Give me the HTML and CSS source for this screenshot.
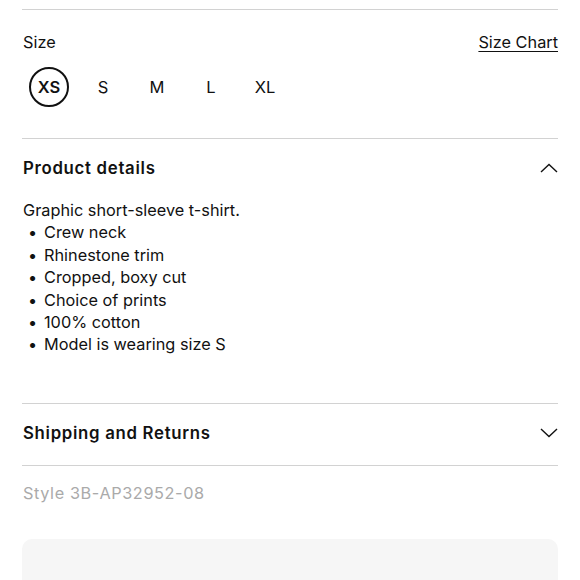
FILE: index.html
```html
<!DOCTYPE html>
<html lang="en">
<head>
  <meta charset="UTF-8">
  <title>Product</title>
  <link rel="stylesheet" href="styles.css">
</head>
<body>

<section class="size-section">
  <div class="size-head">
    <span>Size</span>
    <a href="#" class="size-chart">Size Chart</a>
  </div>
  <div class="sizes">
    <button class="size selected">XS</button>
    <button class="size">S</button>
    <button class="size">M</button>
    <button class="size">L</button>
    <button class="size">XL</button>
  </div>
</section>

<section class="panel open">
  <div class="panel-head">
    <h3>Product details</h3>
    <svg class="chevron" width="18" height="10" viewBox="0 0 18 10"><path d="M1 9 L9 1.5 L17 9" fill="none" stroke="#111" stroke-width="1.4"/></svg>
  </div>
  <div class="details">
    <p>Graphic short-sleeve t-shirt.</p>
    <ul>
      <li>Crew neck</li>
      <li>Rhinestone trim</li>
      <li>Cropped, boxy cut</li>
      <li>Choice of prints</li>
      <li>100% cotton</li>
      <li>Model is wearing size S</li>
    </ul>
  </div>
</section>

<section class="panel">
  <div class="panel-head">
    <h3>Shipping and Returns</h3>
    <svg class="chevron" width="18" height="10" viewBox="0 0 18 10"><path d="M1 1 L9 8.5 L17 1" fill="none" stroke="#111" stroke-width="1.4"/></svg>
  </div>
</section>

<div class="style-code">Style 3B-AP32952-08</div>

<div class="promo-box"></div>

</body>
</html>
```

FILE: styles.css
```css
body { font-family: Inter, "Noto Sans", sans-serif; margin: 0; padding: 0 22px; color: #111; font-size: 16.3px; line-height: 22px; background: #fff; }
section { border-top: 1px solid #d2d2d2; }
.size-section { margin-top: 9px; padding: 21px 0 31px; }
.size-head { display: flex; justify-content: space-between; padding-left: 1px; }
.size-chart { color: #111; text-decoration: underline; text-underline-offset: 3px; }
.sizes { display: flex; gap: 14px; margin-top: 14px; margin-left: 7px; }
.size { width: 40px; height: 40px; border: 2px solid transparent; border-radius: 50%; background: none; font: inherit; font-size: 16.5px; color: #111; padding: 0; }
.size.selected { border-color: #111; font-weight: 600; }
.panel-head { display: flex; justify-content: space-between; align-items: center; padding-left: 1px; }
.panel-head h3 { margin: 0; font-size: 16.8px; font-weight: 600; letter-spacing: 0.7px; }
.panel { padding: 18px 0 21px; }
.panel.open { padding-bottom: 47px; }
.details { margin-top: 20px; line-height: 22.4px; padding-left: 1px; }
.details p { margin: 0; }
.details ul { list-style: none; margin: 0; padding: 0; }
.details li { display: flex; }
.details li::before { content: "•"; width: 16px; padding-left: 5px; }
.style-code { border-top: 1px solid #d2d2d2; padding: 16px 0 0 1px; color: #aaa; letter-spacing: 0.6px; }
.promo-box { margin-top: 35px; height: 100px; background: #f6f6f6; border-radius: 10px; }
```
